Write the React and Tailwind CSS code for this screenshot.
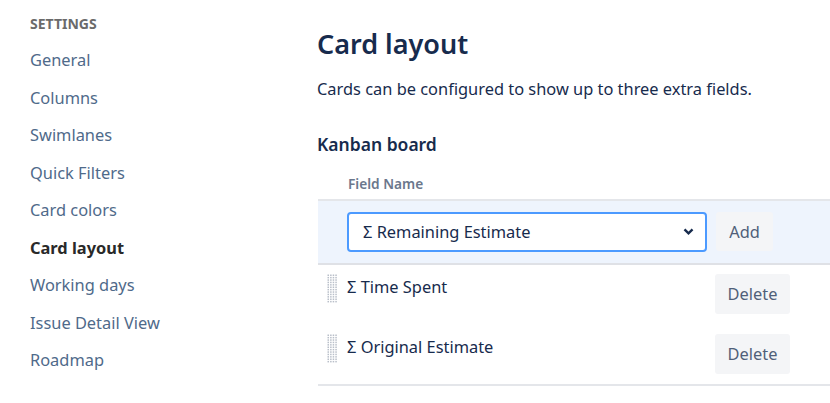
import React from "react";

const navItems = [
  "General",
  "Columns",
  "Swimlanes",
  "Quick Filters",
  "Card colors",
  "Card layout",
  "Working days",
  "Issue Detail View",
  "Roadmap",
];

const fields = ["Σ Time Spent", "Σ Original Estimate"];

const DragHandle = () => (
  <svg width="11" height="29" viewBox="0 0 11 29" className="shrink-0">
    {Array.from({ length: 12 }).map((_, r) =>
      [0, 1, 2, 3].map((c) => (
        <rect key={`${r}-${c}`} x={0.5 + c * 2.6} y={0.5 + r * 2.4} width="1.5" height="1.5" fill="#b9bfc9" />
      ))
    )}
  </svg>
);

const App = () => {
  return (
    <div
      className="w-[830px] h-[403px] bg-white flex overflow-hidden text-[#172b4d]"
      style={{ fontFamily: '"Noto Sans", "Open Sans", sans-serif' }}
    >
      <aside className="w-[287px] shrink-0 pl-[30px] pt-[13px]">
        <p className="text-[14px] font-bold text-[#6b6b6b] mb-[8px]">SETTINGS</p>
        <ul className="flex flex-col">
          {navItems.map((item) => (
            <li
              key={item}
              className={
                item === "Card layout"
                  ? "h-[37.5px] flex items-center text-[16.4px] font-bold text-[#292929]"
                  : "h-[37.5px] flex items-center text-[16.4px] text-[#4f6a8a]"
              }
            >
              {item}
            </li>
          ))}
        </ul>
      </aside>

      <main className="flex-1 pt-[24px]">
        <h1 className="text-[27px] font-semibold text-[#172b4d] leading-[40px] pl-[30px]">Card layout</h1>
        <p className="text-[16.4px] text-[#172b4d] mt-[13px] pl-[30px]">
          Cards can be configured to show up to three extra fields.
        </p>
        <h2 className="text-[17.5px] font-semibold text-[#172b4d] mt-[29px] pl-[30px]">Kanban board</h2>

        <div className="mt-[13px] ml-[31px]">
          <div className="h-[31px] flex items-center pl-[30px] border-b-2 border-[#e4e6ea] text-[13.7px] font-semibold text-[#6b778c]">
            Field Name
          </div>

          <div className="h-[64px] bg-[#eef4fd] border-b-2 border-[#dfe1e6] flex items-center pl-[29px] gap-[9px]">
            <div className="w-[360px] h-[40px] border-2 border-[#4c9aff] rounded-[4px] bg-white flex items-center justify-between pl-[14px] pr-[10px] text-[16.4px]">
              <span>Σ Remaining Estimate</span>
              <svg width="13" height="13" viewBox="0 0 12 12">
                <path d="M2.3 4 L6 7.7 L9.7 4" fill="none" stroke="#172b4d" strokeWidth="2.2" />
              </svg>
            </div>
            <button className="h-[39px] w-[57px] rounded-[3px] bg-[#f4f5f7] text-[16.4px] text-[#505f79]">Add</button>
          </div>

          {fields.map((f, i) => (
            <div
              key={f}
              className={
                i === fields.length - 1
                  ? "h-[61px] flex items-start pt-[9px] border-b-2 border-[#e4e6ea]"
                  : "h-[60px] flex items-start pt-[9px]"
              }
            >
              <div className="w-[29px] pl-[9px]">
                <DragHandle />
              </div>
              <span className="w-[368px] text-[16.4px] text-[#172b4d] pt-[1px]">{f}</span>
              <button className="h-[40px] w-[75px] rounded-[3px] bg-[#f4f5f7] text-[16.4px] text-[#505f79]">
                Delete
              </button>
            </div>
          ))}
        </div>
      </main>
    </div>
  );
};

export default App;
